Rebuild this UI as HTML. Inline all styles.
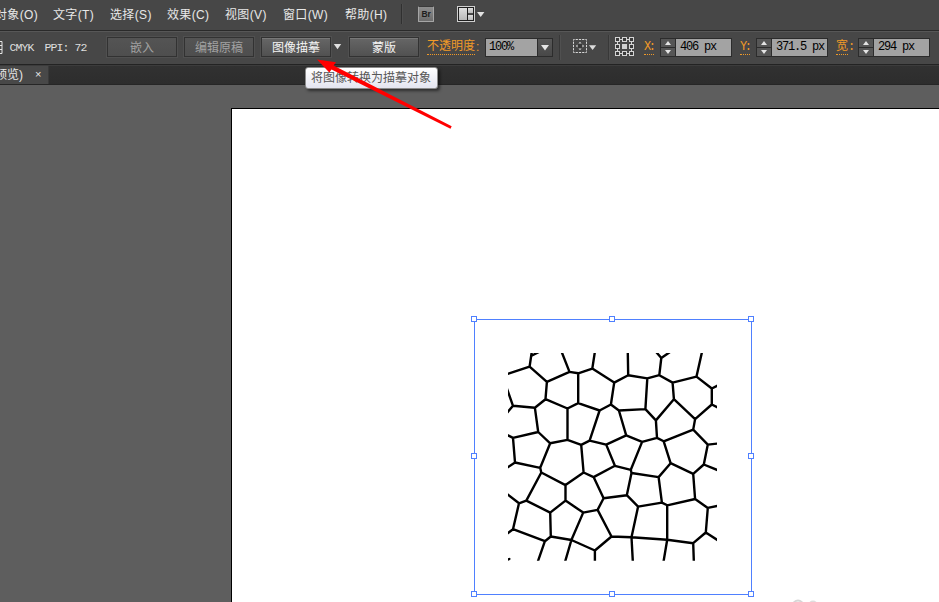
<!DOCTYPE html>
<html lang="zh-CN">
<head>
<meta charset="utf-8">
<title>Illustrator</title>
<style>
*{margin:0;padding:0;box-sizing:border-box}
html,body{width:939px;height:602px;overflow:hidden;background:#5e5e5e}
body{position:relative;font-family:"Liberation Sans","Noto Sans CJK SC",sans-serif;font-size:12px;color:#e6e6e6}
.abs{position:absolute}
#menubar{left:0;top:0;width:939px;height:30px;background:#474747}
#ctrlbar{left:0;top:30px;width:939px;height:35px;background:#474747;border-top:1px solid #2a2a2a;border-bottom:1px solid #232323;box-shadow:inset 0 1px 0 #575757}
#tabstrip{left:0;top:65px;width:939px;height:20px;background:linear-gradient(#313131,#2d2d2d);border-top:1px solid #3c3c3c;border-bottom:1px solid #262626}
#tab{left:0;top:66px;width:49px;height:18px;background:#484848;border-right:1px solid #3a3a3a}
#canvas{left:0;top:85px;width:939px;height:517px;background:#5e5e5e}
#artboard{left:231px;top:108px;width:720px;height:520px;background:#fff;border:1px solid #000}
.mi{position:absolute;top:6px;height:18px;line-height:18px;font-size:12px;color:#e8e8e8;white-space:nowrap;letter-spacing:.35px}
.btn{position:absolute;top:37px;height:20px;width:70px;border:1px solid #323232;background:linear-gradient(#545454,#4e4e4e);box-shadow:0 0 0 1px #505050;color:#a2a2a2;font-size:12px;line-height:20.500px;text-align:center;white-space:nowrap}
.btn.on{color:#f4f4f4;background:linear-gradient(#666,#515151);box-shadow:0 0 0 1px #505050,inset 0 1px 0 #787878}
.mono{font-family:"Liberation Mono","Noto Sans CJK SC",monospace;font-size:12px;letter-spacing:-1.2px;white-space:nowrap}
.lbl{position:absolute;color:#f09a28;top:39px;height:16px;line-height:16px;white-space:nowrap}
.field{position:absolute;top:38px;height:19px;background:#a3a3a3;border:1px solid #2c2c2c;color:#000;line-height:16px;padding-left:4px}
.spin{position:absolute;top:38px;width:16px;height:19px;background:#565656;border:1px solid #2c2c2c}
.spin.ud:before{content:"";position:absolute;left:0;top:8px;width:14px;height:1px;background:#2c2c2c}
.spin.ud:after{content:"";position:absolute;left:4px;top:2px;border:3px solid transparent;border-top:0;border-bottom:4px solid #e4e4e4;box-shadow:none}
.spin.ud i{position:absolute;left:4px;top:11px;border:3px solid transparent;border-bottom:0;border-top:4px solid #e4e4e4}
.sep{position:absolute;width:1px;background:#333;box-shadow:1px 0 0 #555}
</style>
</head>
<body>
<div id="menubar" class="abs"></div>
<div id="ctrlbar" class="abs"></div>
<div id="tabstrip" class="abs"></div>
<div id="tab" class="abs"></div>
<div id="canvas" class="abs"></div>
<div id="artboard" class="abs"></div>

<!-- menu -->
<div class="mi" style="left:-5px">对象(O)</div>
<div class="mi" style="left:53px">文字(T)</div>
<div class="mi" style="left:110px">选择(S)</div>
<div class="mi" style="left:167px">效果(C)</div>
<div class="mi" style="left:225px">视图(V)</div>
<div class="mi" style="left:283px">窗口(W)</div>
<div class="mi" style="left:345px">帮助(H)</div>
<div class="sep" style="left:401px;top:4px;height:20px;background:#303030;box-shadow:1px 0 0 #4e4e4e"></div>
<div class="abs" style="left:418px;top:6px;width:16px;height:16px;background:linear-gradient(#8e8e8e,#6c6c6c);border:1px solid #a6a6a6;border-top-color:#3a3a3a;border-radius:1px;color:#1e1e1e;font-size:8.500px;font-weight:bold;line-height:14px;text-align:center;letter-spacing:-0.2px">Br</div>
<svg class="abs" style="left:457px;top:6px" width="30" height="16" viewBox="0 0 30 16">
<defs><linearGradient id="lg1" x1="0" y1="0" x2="0" y2="1"><stop offset="0" stop-color="#dedede"/><stop offset="1" stop-color="#b8b8b8"/></linearGradient></defs>
<rect x="0.500" y="0.500" width="17" height="15" fill="#1e1e1e" stroke="#cfcfcf" stroke-width="1"/>
<rect x="2" y="2" width="8" height="12" fill="url(#lg1)"/>
<rect x="11" y="2" width="5" height="5.300" fill="url(#lg1)"/>
<rect x="11" y="8.800" width="5" height="5.200" fill="url(#lg1)"/>
<path d="M20 6h7.400l-3.700 5z" fill="#e2e2e2"/>
</svg>

<!-- control bar -->
<svg class="abs" style="left:0;top:41px" width="4" height="13" viewBox="0 0 4 13"><path d="M0 .5h2v12H0M0 4.500h2M0 8.500h2" fill="none" stroke="#e6e6e6"/></svg>
<div class="abs mono" style="left:9.500px;top:41px;height:14px;line-height:14px;color:#dedede;font-size:11.500px;letter-spacing:-0.900px">CMYK</div><div class="abs mono" style="left:44.500px;top:41px;height:14px;line-height:14px;color:#dedede;font-size:11.500px;letter-spacing:-0.900px">PPI:&nbsp;72</div>
<div class="btn" style="left:107px">嵌入</div>
<div class="btn" style="left:184px">编辑原稿</div>
<div class="btn on" style="left:261px">图像描摹</div>
<svg class="abs" style="left:333px;top:43px" width="10" height="7"><path d="M.8 1h7.400l-3.700 5.200z" fill="#e0e0e0"/></svg>
<div class="btn on" style="left:349px">蒙版</div>
<div class="lbl" style="left:427px;border-bottom:1px dotted #f09a28;height:17px;top:38px;line-height:17px">不透明度</div>
<div class="lbl" style="left:476px">:</div>
<div class="field mono" style="left:485px;width:53px;padding-left:3px">100%</div>
<div class="spin" style="left:537px;width:16px;background:linear-gradient(#585858,#484848)"><svg width="14" height="17"><path d="M3 6h8l-4 5.500z" fill="#e6e6e6"/></svg></div>
<div class="sep" style="left:559px;top:35px;height:25px;background:#383838;box-shadow:1px 0 0 #505050"></div>
<svg class="abs" style="left:573px;top:39px" width="26" height="14" viewBox="0 0 26 14">
<rect x="0.500" y="0.500" width="13" height="13" fill="none" stroke="#d6d6d6" stroke-dasharray="2.250 1" stroke-dashoffset="1.125"/>
<circle cx="7" cy="7" r="2.600" fill="#383838"/>
<path d="M7 2.800l1.600 1.800h-3.200zM7 11.200l1.600-1.800h-3.200zM2.800 7l1.800-1.600v3.200zM11.200 7l-1.800-1.600v3.200z" fill="#cfcfcf"/>
<path d="M16 6.200h7.200l-3.600 4.800z" fill="#dcdcdc"/>
</svg>
<div class="sep" style="left:608px;top:35px;height:25px;background:#383838;box-shadow:1px 0 0 #505050"></div>
<svg class="abs" style="left:615px;top:37px" width="19" height="19" viewBox="0 0 19 19">
<g fill="#3a3a3a" stroke="#d4d4d4">
<path fill="none" d="M2.500 2.500h14v14h-14z"/>
<rect x="0.500" y="0.500" width="4" height="4"/><rect x="7.500" y="0.500" width="4" height="4"/><rect x="14.500" y="0.500" width="4" height="4"/>
<rect x="0.500" y="7.500" width="4" height="4"/><rect x="14.500" y="7.500" width="4" height="4"/>
<rect x="0.500" y="14.500" width="4" height="4"/><rect x="7.500" y="14.500" width="4" height="4"/><rect x="14.500" y="14.500" width="4" height="4"/>
</g>
<rect x="7" y="7" width="5" height="5" fill="#d0d0d0"/>
</svg>
<div class="lbl mono" style="left:644px;border-bottom:1px dotted #f09a28;height:15px;line-height:15px;top:40px;width:10px;letter-spacing:-2.500px">X:</div>
<div class="spin ud" style="left:660px"><i></i></div>
<div class="field mono" style="left:675px;width:57px">406&nbsp;px</div>
<div class="lbl mono" style="left:740px;border-bottom:1px dotted #f09a28;height:15px;line-height:15px;top:40px;width:10px;letter-spacing:-2.500px">Y:</div>
<div class="spin ud" style="left:756px"><i></i></div>
<div class="field mono" style="left:771px;width:57px">371.5&nbsp;px</div>
<div class="lbl" style="left:836px;border-bottom:1px dotted #f09a28;height:17px;line-height:17px;top:38px">宽</div><div class="lbl mono" style="left:848px;top:40px;height:15px;line-height:15px">:</div>
<div class="spin ud" style="left:858px"><i></i></div>
<div class="field mono" style="left:873px;width:57px">294&nbsp;px</div>

<!-- tab -->
<div class="abs" style="left:-5px;top:66px;height:18px;line-height:18px;font-size:12px;color:#e6e6e6;white-space:nowrap">预览)</div>
<div class="abs" style="left:35px;top:66px;height:18px;line-height:17px;font-size:11px;color:#e6e6e6">×</div>

<!-- tooltip -->
<div class="abs" style="left:305px;top:67px;width:133px;height:22px;border:1px solid #8c8c8c;border-radius:3px;background:linear-gradient(#fff,#e4e5f0);box-shadow:2px 2px 3px rgba(0,0,0,.5);color:#575757;font-size:12px;line-height:20px;padding-left:5px;white-space:nowrap">将图像转换为描摹对象</div>

<!-- selection + pattern -->
<svg id="art" class="abs" style="left:0;top:0" width="939" height="602" viewBox="0 0 939 602">
<defs><clipPath id="pc"><rect x="508" y="353" width="209" height="207.700"/></clipPath></defs>
<g id="pattern" clip-path="url(#pc)"><path fill="none" stroke="#000" stroke-width="2.400" stroke-linecap="round" stroke-linejoin="round" d="M529.6 366.6L497.0 377.5 M529.6 366.6L532.6 346.2 M532.0 355.5L539.0 352.0 M529.6 366.6L546.9 381.9 M546.9 381.9L569.5 371.9 M569.5 371.9L558.4 343.6 M569.5 371.9L578.2 373.3 M578.2 373.3L578.2 403.2 M546.9 381.9L545.5 399.2 M545.5 399.2L534.9 407.8 M534.9 407.8L513.0 405.8 M513.0 405.8L505.3 383.9 M513.0 405.8L505.3 414.8 M534.9 407.8L538.2 432.0 M545.5 399.2L567.5 408.5 M567.5 408.5L578.2 403.2 M567.5 408.5L567.5 439.9 M578.2 373.3L592.3 368.6 M592.3 368.6L595.9 345.2 M592.3 368.6L614.2 382.6 M614.2 382.6L628.2 375.2 M628.2 375.2L627.6 341.9 M628.2 375.2L647.3 378.4 M647.3 378.4L659.3 375.2 M647.3 378.4L645.4 409.1 M645.4 409.1L655.9 420.4 M614.2 382.6L610.9 404.5 M610.9 404.5L599.6 410.5 M599.6 410.5L578.2 403.2 M599.6 410.5L589.6 440.6 M610.9 404.5L618.9 410.5 M618.9 410.5L645.4 409.1 M618.9 410.5L626.2 435.3 M659.3 375.2L661.3 358.0 M661.3 358.0L654.9 350.5 M661.3 358.0L672.2 350.5 M659.3 375.2L672.6 382.6 M672.6 382.6L696.5 376.6 M696.5 376.6L704.4 341.2 M696.5 376.6L711.8 388.5 M711.8 388.5L719.6 384.6 M711.8 388.5L711.8 404.5 M711.8 404.5L719.6 408.4 M711.8 404.5L695.1 419.1 M695.1 419.1L693.2 429.6 M695.1 419.1L673.9 399.2 M673.9 399.2L672.6 382.6 M673.9 399.2L655.9 420.4 M655.9 420.4L657.0 437.9 M538.2 432.0L513.0 437.9 M513.0 437.9L505.3 434.0 M513.0 437.9L515.0 462.5 M515.0 462.5L504.3 469.5 M515.0 462.5L540.2 467.8 M538.2 432.0L550.2 443.3 M550.2 443.3L540.2 467.8 M540.2 467.8L541.3 472.5 M541.3 472.5L526.3 500.6 M541.3 472.5L565.5 485.1 M550.2 443.3L567.5 439.9 M567.5 439.9L581.2 444.9 M581.2 444.9L583.6 472.5 M583.6 472.5L565.5 485.1 M565.5 485.1L565.5 500.6 M581.2 444.9L589.6 440.6 M589.6 440.6L606.2 444.6 M606.2 444.6L626.2 435.3 M626.2 435.3L642.1 441.9 M642.1 441.9L657.0 437.9 M642.1 441.9L630.8 469.8 M630.8 469.8L614.9 465.8 M614.9 465.8L606.2 444.6 M614.9 465.8L593.6 477.1 M593.6 477.1L583.6 472.5 M593.6 477.1L603.6 498.2 M603.6 498.2L626.8 495.2 M626.8 495.2L631.5 473.0 M630.8 469.8L631.5 473.0 M631.5 473.0L658.6 477.1 M626.8 495.2L638.1 506.6 M657.0 437.9L663.7 441.3 M663.7 441.3L693.2 429.6 M693.2 429.6L707.8 444.6 M707.8 444.6L721.6 443.2 M707.8 444.6L703.8 464.5 M703.8 464.5L723.6 472.5 M703.8 464.5L693.2 473.8 M693.2 473.8L670.6 463.2 M670.6 463.2L663.7 441.3 M670.6 463.2L658.6 477.1 M658.6 477.1L661.9 502.6 M693.2 473.8L695.1 499.0 M507 560.3L509.3 558.9 M519.0 503.3L502.3 490.4 M519.0 503.3L526.3 500.6 M526.3 500.6L550.2 512.6 M550.2 512.6L565.5 500.6 M565.5 500.6L583.2 512.6 M550.2 512.6L550.8 536.5 M550.8 536.5L544.9 541.2 M544.9 541.2L513.0 529.2 M513.0 529.2L519.0 503.3 M513.0 529.2L505.3 535.2 M544.9 541.2L534.9 570.0 M550.8 536.5L571.4 540.0 M571.4 540.0L562.5 570.6 M571.4 540.0L583.2 512.6 M571.4 540.0L594.9 550.5 M583.2 512.6L597.6 509.9 M597.6 509.9L603.6 498.2 M597.6 509.9L611.5 536.5 M611.5 536.5L594.9 550.5 M594.9 550.5L594.9 565.3 M611.5 536.5L631.5 537.2 M631.5 537.2L638.1 506.6 M631.5 537.2L633.4 572.0 M631.5 537.2L667.2 539.8 M638.1 506.6L661.9 502.6 M661.9 502.6L667.2 505.3 M667.2 505.3L695.1 499.0 M695.1 499.0L707.8 507.9 M707.8 507.9L721.6 505.1 M707.8 507.9L705.8 532.5 M705.8 532.5L722.6 543.4 M705.8 532.5L693.2 543.2 M693.2 543.2L694.1 569.0 M693.2 543.2L667.2 539.8 M667.2 539.8L667.2 505.3 M667.2 539.8L662.0 570.7"/></g>
<rect x="474.500" y="319.500" width="277" height="275" fill="none" stroke="#4f80ff" stroke-width="1"/>
<g fill="#fff" stroke="#4f80ff" stroke-width="1"><rect x="471.500" y="316.500" width="5" height="5"/><rect x="609.500" y="316.500" width="5" height="5"/><rect x="748.500" y="316.500" width="5" height="5"/><rect x="471.500" y="453.500" width="5" height="5"/><rect x="748.500" y="453.500" width="5" height="5"/><rect x="471.500" y="591.500" width="5" height="5"/><rect x="609.500" y="591.500" width="5" height="5"/><rect x="748.500" y="591.500" width="5" height="5"/></g>
<g opacity=".9"><circle cx="798" cy="605.500" r="5" fill="none" stroke="#d2d2d2" stroke-width="2"/><circle cx="813" cy="605" r="4.500" fill="#dadada"/></g>
<!-- red arrow -->
<path d="M317 59.500L336 62.300L333.600 65.500L451.700 126.300L450.500 128.700L331.500 69.600L329.300 72.500Z" fill="#f00"/>
</svg>
</body>
</html>
